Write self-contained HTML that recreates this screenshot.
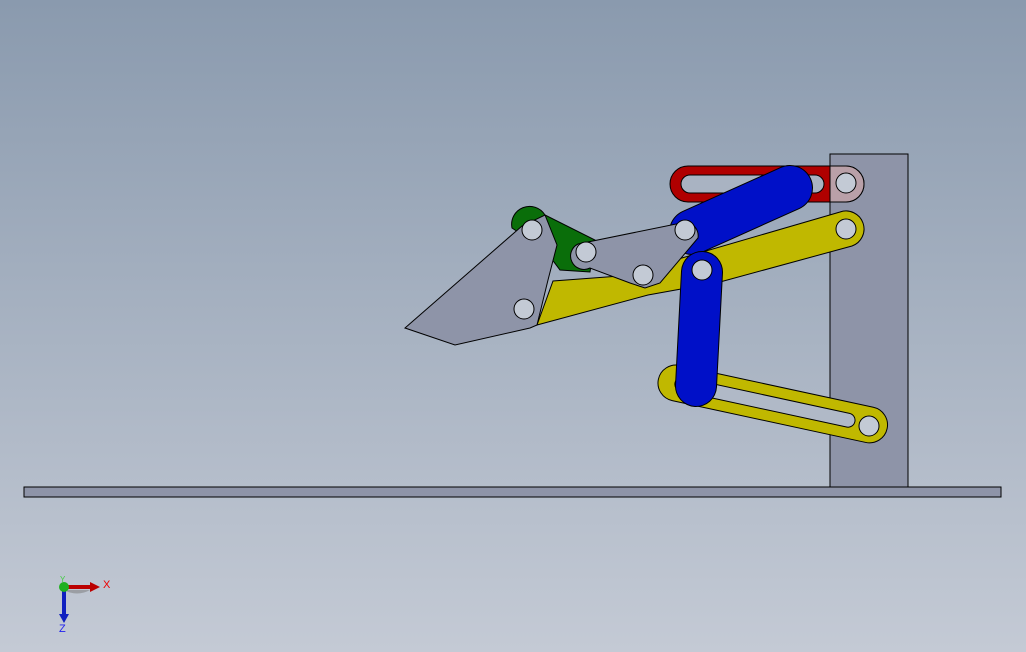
<!DOCTYPE html>
<html><head><style>html,body{margin:0;padding:0;width:1026px;height:652px;overflow:hidden}</style></head>
<body>
<svg width="1026" height="652" viewBox="0 0 1026 652" xmlns="http://www.w3.org/2000/svg" font-family="Liberation Sans, sans-serif">
<defs><linearGradient id="bg" x1="0" y1="0" x2="0" y2="1"><stop offset="0" stop-color="#8a9aae"/><stop offset="1" stop-color="#c4cad5"/></linearGradient></defs>
<rect width="1026" height="652" fill="url(#bg)"/>
<rect x="830" y="154" width="78" height="334" fill="#8e94a8" stroke="#000"/>
<rect x="24" y="487" width="977" height="10" fill="#8e94a8" stroke="#000"/>
<!-- red slot link -->
<path d="M688 166 L846 166 A18 18 0 0 1 846 202 L688 202 A18 18 0 0 1 688 166 Z" fill="#b00000" stroke="#000"/>
<path d="M830 166 L846 166 A18 18 0 0 1 846 202 L830 202 Z" fill="#b9a0a8" stroke="#000"/>
<path d="M690 175 L815 175 A9 9 0 0 1 815 193 L690 193 A9 9 0 0 1 690 175 Z" fill="#a9b3c2" stroke="#000"/>
<!-- lower yellow slot -->
<g transform="rotate(12.2 676 383)">
<path d="M676 365 L874 365 A18 18 0 0 1 874 401 L676 401 A18 18 0 0 1 676 365 Z" fill="#c0b800" stroke="#000"/>
<path d="M682 376 L852 376 A7 7 0 0 1 852 390 L682 390 A7 7 0 0 1 682 376 Z" fill="#b0b9c7" stroke="#000"/>
</g>
<circle cx="869" cy="426" r="10" fill="#c3cad5" stroke="#000"/>
<!-- green -->
<path d="M512 228 A18 18 0 0 1 545 215 L595 240 L590 272 L560 270 L545 250 Z" fill="#0a6e0a" stroke="#000"/>
<!-- yellow upper link -->
<path d="M537 325 L553 281 L620 276 L840 212 A17 17 0 0 1 852 246 L720 282 L648 295 Z" fill="#c0b800" stroke="#000"/>
<circle cx="846" cy="229" r="10" fill="#c3cad5" stroke="#000"/>
<!-- blue upper -->
<line x1="692" y1="232" x2="790" y2="188" stroke="#000" stroke-width="46" stroke-linecap="round"/>
<line x1="692" y1="232" x2="790" y2="188" stroke="#0010c8" stroke-width="44" stroke-linecap="round"/>
<circle cx="846" cy="183" r="10" fill="#c3cad5" stroke="#000"/>
<!-- bucket -->
<path d="M405 328 L522 226 L545 215 L557 245 L548 280 L537 325 L530 328 L455 345 Z" fill="#8e94a8" stroke="#000"/>
<circle cx="532" cy="230" r="10" fill="#c3cad5" stroke="#000"/>
<circle cx="524" cy="309" r="10" fill="#c3cad5" stroke="#000"/>
<!-- gray link -->
<path d="M578 244 L686 222 A14 14 0 0 1 698 238 L660 283 L645 288 L630 283 L590 268 A13 13 0 0 1 578 244 Z" fill="#8e94a8" stroke="#000"/>
<circle cx="586" cy="252" r="10" fill="#c3cad5" stroke="#000"/>
<circle cx="643" cy="275" r="10" fill="#c3cad5" stroke="#000"/>
<circle cx="685" cy="230" r="10" fill="#c3cad5" stroke="#000"/>
<!-- blue vertical -->
<line x1="702" y1="272" x2="696" y2="386" stroke="#000" stroke-width="42" stroke-linecap="round"/>
<line x1="702" y1="272" x2="696" y2="386" stroke="#0010c8" stroke-width="40" stroke-linecap="round"/>
<circle cx="702" cy="270" r="10" fill="#c3cad5" stroke="#000"/>
<!-- triad -->
<path d="M64 590 A26 26 0 0 0 90 590 L64 590 Z" fill="#777" opacity="0.5"/>
<line x1="64" y1="587" x2="92" y2="587" stroke="#b00" stroke-width="4"/>
<path d="M90 582 L100 587 L90 592 Z" fill="#b00"/>
<line x1="64" y1="587" x2="64" y2="616" stroke="#1020c0" stroke-width="4"/>
<path d="M59 614 L64 623 L69 614 Z" fill="#1020c0"/>
<circle cx="64" cy="587" r="5" fill="#20b020"/>
<text x="103" y="588" font-size="11" fill="#e00">X</text>
<text x="59" y="632" font-size="11" fill="#22e">Z</text>
<text x="60" y="582" font-size="8" fill="#4c4">Y</text>
</svg>
</body></html>
